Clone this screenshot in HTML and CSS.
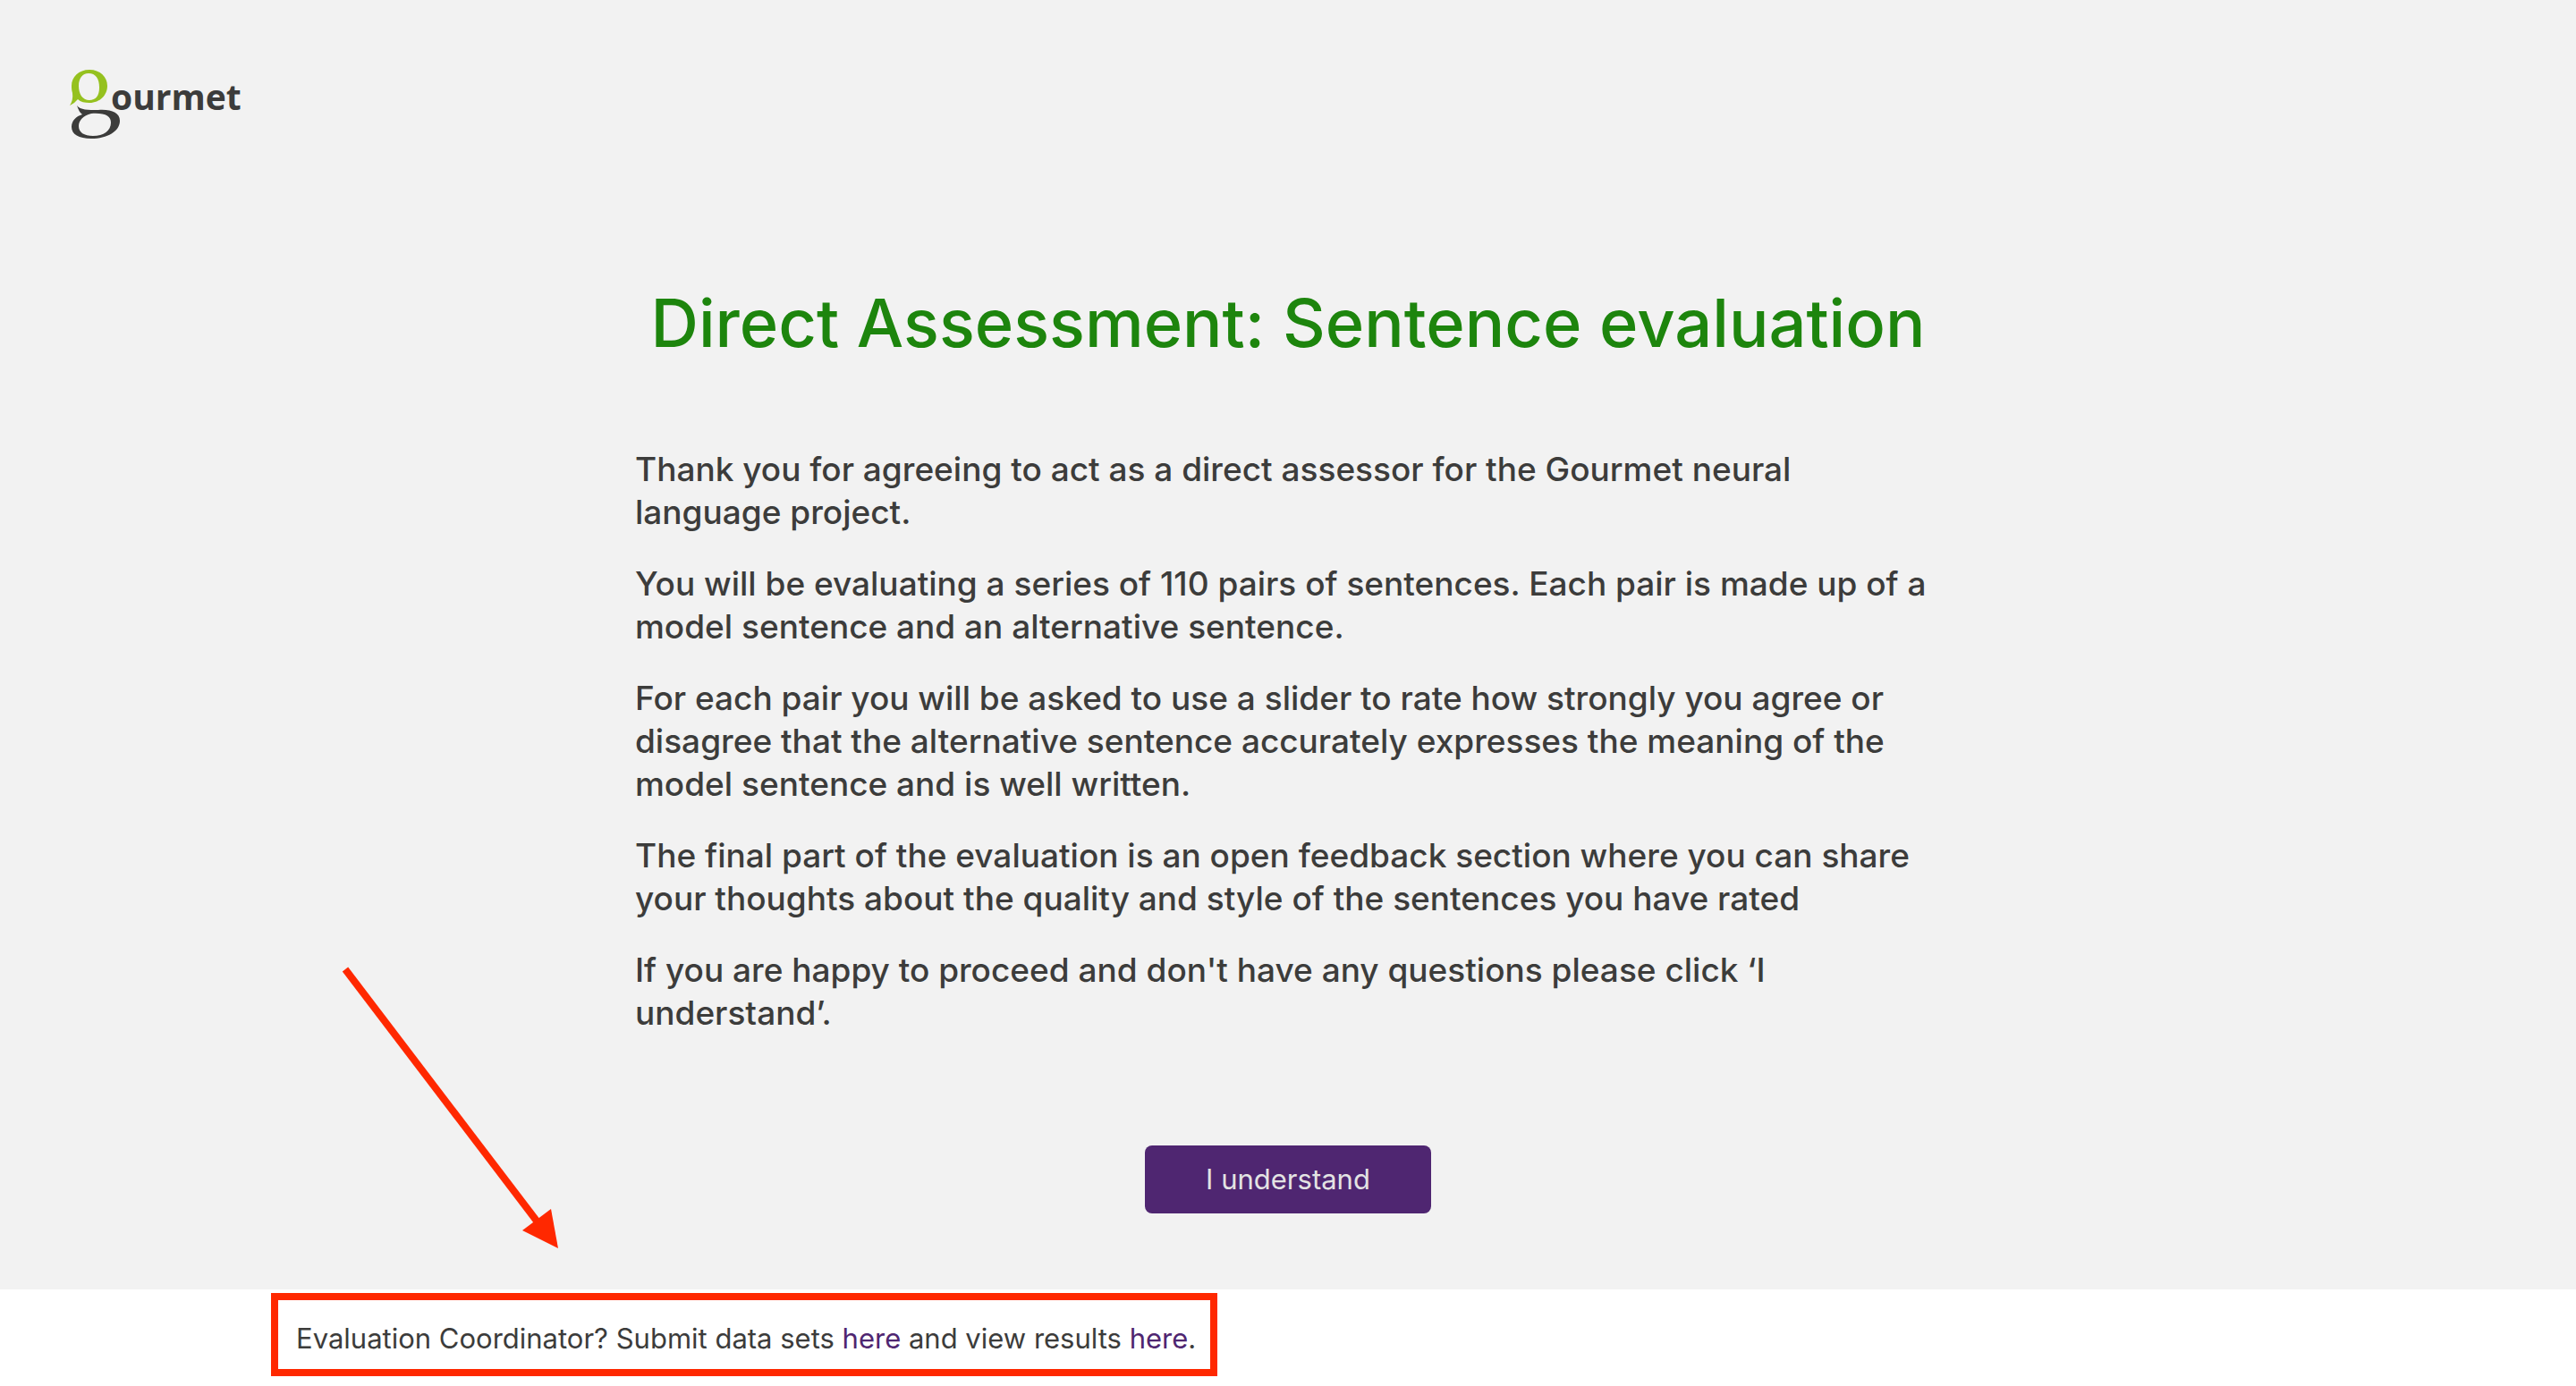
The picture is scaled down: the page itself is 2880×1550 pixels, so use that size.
FILE: index.html
```
<!DOCTYPE html>
<html lang="en">
<head>
<meta charset="utf-8">
<title>Direct Assessment: Sentence evaluation</title>
<link rel="stylesheet" href="styles.css">
</head>
<body>
<div class="page">
  <header class="header">
    <a class="logo" href="#" aria-label="Gourmet">
      <svg class="logo-mark" viewBox="0 0 58 80" aria-hidden="true">
        <path fill="#95c11f" fill-rule="evenodd" d="M22 2C34 2 42 10 42 20S34 39 22 39C17 39 12 38 9 35Q6 39 0 42Q4 36 3 28C2 25 2 22 2 20C2 10 10 2 22 2ZM21 6C14 6 10 12 10 20C10 29 14 36 22 36C29 36 33 31 33 22C33 12 29 6 21 6Z"/>
        <path fill="#3c3c3b" fill-rule="evenodd" d="M8 42C12 47 20 47 32 47C46 46 56 50 56 59C56 71 42 79 24 79C10 79 2 74 2 66C2 59 7 54 14 52C11 50 10 47 8 42ZM24 51C15 53 10 59 10 65C10 72 16 76 26 76C38 76 46 70 46 61C46 54 40 50 24 51Z"/>
      </svg>
      <span class="logo-text">ourmet</span>
    </a>
  </header>
  <main class="main">
    <h1 class="title">Direct Assessment: Sentence evaluation</h1>
    <div class="intro">
      <p>Thank you for agreeing to act as a direct assessor for the Gourmet neural language project.</p>
      <p>You will be evaluating a series of 110 pairs of sentences. Each pair is made up of a model sentence and an alternative sentence.</p>
      <p>For each pair you will be asked to use a slider to rate how strongly you agree or disagree that the alternative sentence accurately expresses the meaning of the model sentence and is well written.</p>
      <p>The final part of the evaluation is an open feedback section where you can share your thoughts about the quality and style of the sentences you have rated</p>
      <p>If you are happy to proceed and don't have any questions please click ‘I understand’.</p>
    </div>
    <button class="button" type="button">I understand</button>
  </main>
  <svg class="arrow" viewBox="0 0 250 330" aria-hidden="true">
    <path d="M6 4L222 288" stroke="#ff2800" stroke-width="8"/>
    <path d="M244 316L236 272L204 296Z" fill="#ff2800"/>
  </svg>
</div>
<footer class="footer">
  <p class="note">Evaluation Coordinator? Submit data sets <a href="#">here</a> and view results <a href="#">here</a>.</p>
</footer>
</body>
</html>
```
FILE: styles.css
```
body {
  margin: 0;
  font-family: Inter, sans-serif;
  color: #3c3c3b;
  background: #fff;
}

.page {
  position: relative;
  padding-bottom: 85px;
  background: #f2f2f2;
}

.header {
  display: flex;
  padding: 76px 78px 0;
}

.logo {
  display: flex;
  color: #3c3c3b;
  text-decoration: none;
}

.logo-mark {
  width: 58px;
  height: 80px;
}

.logo-text {
  margin-left: -12px;
  font: 700 39px/64px "Open Sans", sans-serif;
}

.main {
  display: flex;
  flex-direction: column;
  align-items: center;
}

.title {
  margin: 157px 0 0;
  font-size: 74px;
  line-height: 96px;
  font-weight: 500;
  color: #1d850d;
}

.intro {
  max-width: 1460px;
  margin-top: 92px;
  font-size: 37px;
  line-height: 48px;
  font-weight: 500;
}

.intro p {
  margin: 0 0 32px;
}

.button {
  width: 320px;
  height: 76px;
  margin-top: 92px;
  border: 0;
  border-radius: 8px;
  background: #4f2671;
  color: #e3e3e3;
  font: 400 31px/36px Inter, sans-serif;
}

.arrow {
  position: absolute;
  left: 380px;
  bottom: 32px;
  width: 250px;
  height: 330px;
}

.footer {
  padding: 4px 303px 11px;
}

.note {
  width: fit-content;
  margin: 0;
  padding: 25px 16px 16px 20px;
  border: 8px solid #ff2800;
  font-size: 31px;
  line-height: 36px;
}

.note a {
  color: #4f2671;
  text-decoration: none;
}
```
